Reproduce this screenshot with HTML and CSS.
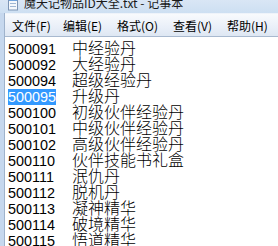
FILE: index.html
```html
<!DOCTYPE html>
<html lang="zh">
<head>
<meta charset="utf-8">
<title>魔天记物品ID大全.txt - 记事本</title>
<link rel="stylesheet" href="styles.css">
</head>
<body>
<div class="window">
  <div class="titlebar">
    <svg class="app-icon" width="12" height="12" viewBox="0 0 12 12">
      <rect x="1.5" y="-2" width="9" height="12" fill="#f4f8fc" stroke="#7d95b5"/>
      <rect x="2" y="0" width="8" height="1" fill="#6fa3dd"/>
      <line x1="3" y1="3.5" x2="9" y2="3.5" stroke="#9fb7d4"/>
      <line x1="3" y1="6.5" x2="9" y2="6.5" stroke="#9fb7d4"/>
    </svg>
    <span class="title">魔天记物品ID大全.txt - 记事本</span>
  </div>
  <div class="body">
    <div class="menubar">
      <span class="menu m1">文件(F)</span>
      <span class="menu m2">编辑(E)</span>
      <span class="menu m3">格式(O)</span>
      <span class="menu m4">查看(V)</span>
      <span class="menu m5">帮助(H)</span>
    </div>
    <div class="editor">
      <div class="row"><span class="id"><span class="num">500091</span></span><span class="name">中经验丹</span></div>
      <div class="row"><span class="id"><span class="num">500092</span></span><span class="name">大经验丹</span></div>
      <div class="row"><span class="id"><span class="num">500094</span></span><span class="name">超级经验丹</span></div>
      <div class="row"><span class="id"><span class="num selected">500095</span></span><span class="name">升级丹</span></div>
      <div class="row"><span class="id"><span class="num">500100</span></span><span class="name">初级伙伴经验丹</span></div>
      <div class="row"><span class="id"><span class="num">500101</span></span><span class="name">中级伙伴经验丹</span></div>
      <div class="row"><span class="id"><span class="num">500102</span></span><span class="name">高级伙伴经验丹</span></div>
      <div class="row"><span class="id"><span class="num">500110</span></span><span class="name">伙伴技能书礼盒</span></div>
      <div class="row"><span class="id"><span class="num">500111</span></span><span class="name">泯仇丹</span></div>
      <div class="row"><span class="id"><span class="num">500112</span></span><span class="name">脱机丹</span></div>
      <div class="row"><span class="id"><span class="num">500113</span></span><span class="name">凝神精华</span></div>
      <div class="row"><span class="id"><span class="num">500114</span></span><span class="name">破境精华</span></div>
      <div class="row"><span class="id"><span class="num">500115</span></span><span class="name">悟道精华</span></div>
    </div>
  </div>
</div>
</body>
</html>
```
FILE: styles.css
```css
html, body {
  margin: 0;
  padding: 0;
}
body {
  width: 278px;
  height: 246px;
  overflow: hidden;
  background: #c6d8ee;
  font-family: "Noto Sans CJK SC", "Noto Sans", sans-serif;
}
.window {
  display: flex;
  flex-direction: column;
  height: 246px;
}
.titlebar {
  height: 13px;
  flex: none;
  display: flex;
  align-items: flex-start;
  overflow: hidden;
  background: linear-gradient(to bottom, #d9e6f5, #cddff2);
}
.app-icon {
  margin-left: 7px;
  margin-top: 0;
  flex: none;
}
.title {
  margin-left: 5px;
  margin-top: -4px;
  font-size: 12px;
  line-height: 14px;
  color: #1a1a1a;
  white-space: nowrap;
}
.body {
  flex: 1;
  display: flex;
  flex-direction: column;
  margin-left: 4px;
  border-left: 1px solid #9fb3cc;
  min-height: 0;
}
.menubar {
  height: 23px;
  flex: none;
  display: flex;
  align-items: center;
  background: linear-gradient(to bottom, #f8fafd, #e9eff8 60%, #dee7f3);
  border-top: 1px solid #eef3fa;
  box-sizing: border-box;
  padding-left: 7px;
}
.menu {
  font-size: 12px;
  line-height: 16px;
  color: #000;
  white-space: nowrap;
  padding-top: 1px;
}
.m1 { width: 51px; }
.m2 { width: 54px; }
.m3 { width: 56px; }
.m4 { width: 54px; }
.editor {
  flex: 1;
  background: #fff;
  border-top: 1px solid #a8b9cf;
  padding: 2px 0 0 3px;
  overflow: hidden;
}
.row {
  display: flex;
  height: 16px;
  line-height: 16px;
  white-space: nowrap;
}
.id {
  width: 64px;
  flex: none;
}
.num {
  display: inline-block;
  font-family: "Liberation Sans", sans-serif;
  font-size: 14.4px;
  line-height: 16px;
  height: 16px;
  color: #000;
}
.num.selected {
  background: #3399ff;
  color: #fff;
}
.name {
  font-size: 16px;
  line-height: 16px;
  color: #000;
  font-weight: 300;
}
```
